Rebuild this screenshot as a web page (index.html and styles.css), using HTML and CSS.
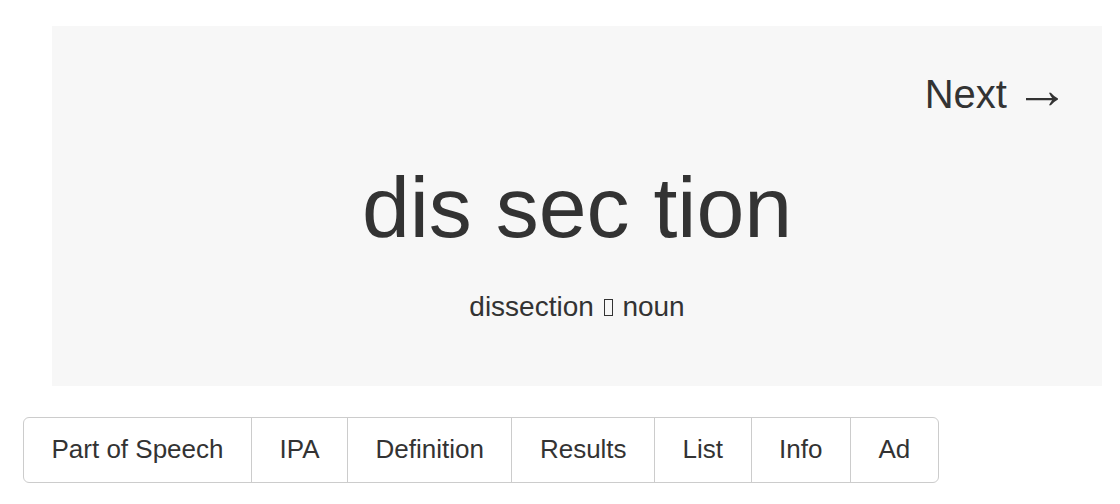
FILE: index.html
```html
<!DOCTYPE html>
<html>
<head>
    <meta charset="UTF-8">
    <title>dissection</title>
    <link rel="stylesheet" href="styles.css">
</head>
<body>
<div class="page">
    <div class="card">
        <div class="next"><a href="#">Next <span class="arrow">&rarr;</span></a></div>
        <h1 class="word">dis sec tion</h1>
        <p class="sub">dissection <span class="tofu"></span> noun</p>
    </div>
    <div class="tabs">
        <a class="tab" href="#">Part of Speech</a>
        <a class="tab" href="#">IPA</a>
        <a class="tab" href="#">Definition</a>
        <a class="tab" href="#">Results</a>
        <a class="tab" href="#">List</a>
        <a class="tab" href="#">Info</a>
        <a class="tab" href="#">Ad</a>
    </div>
</div>
</body>
</html>
```

FILE: styles.css
```css
*{
    box-sizing:border-box;
}

body{
    margin:0;
    font-family:"Liberation Sans", Arial, sans-serif;
    color:#333;
    background:#fff;
}

.page{
    padding:26px 18px 0 23px;
}

.card{
    margin-left:29px;
    background:#f7f7f7;
    padding:46px 40px 64px;
}

.next{
    text-align:right;
    font-size:40px;
    line-height:44px;
}

.next a{
    color:#333;
    text-decoration:none;
}

.arrow{
    font-size:54px;
    line-height:0;
    margin-left:-3px;
    margin-right:-7px;
}

.word{
    margin:49px 0 0;
    text-align:center;
    font-size:86px;
    line-height:84px;
    font-weight:normal;
}

.sub{
    margin:43px 0 0;
    text-align:center;
    font-size:28px;
    line-height:30px;
}

/* missing glyph box */
.tofu{
    display:inline-block;
    width:9px;
    height:17px;
    border:1.5px solid #333;
    margin:0 2px;
}

.tabs{
    display:inline-flex;
    margin-top:31px;
    border:1px solid #ccc;
    border-radius:6px;
    background:#fff;
}

.tab{
    display:block;
    padding:12px 27.5px 12.5px;
    font-size:26px;
    line-height:39px;
    color:#333;
    text-decoration:none;
    border-left:1px solid #ccc;
}

.tab:first-child{
    border-left:none;
}
```
